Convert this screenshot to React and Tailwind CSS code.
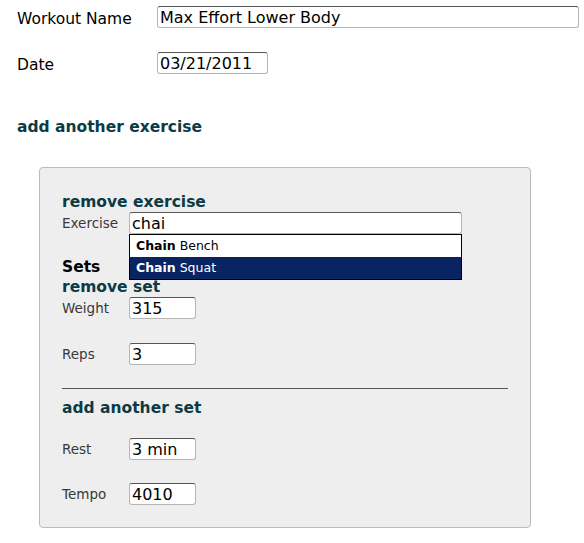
import React from "react";

const font = { fontFamily: '"DejaVu Sans", Verdana, sans-serif' };

function Input({ value, w }) {
  return (
    <input
      readOnly
      value={value}
      className={`${w} h-[22px] bg-white border border-[#b5b5b5] border-t-[#555] rounded-[3px] px-[2px] text-[16px] leading-[20px] text-black outline-none`}
      style={font}
    />
  );
}

function Row({ label, children, className = "" }) {
  return (
    <div className={`flex items-center h-[22px] ${className}`}>
      <div className="w-[67px] text-[13.5px] leading-[22px] text-[#383838]">{label}</div>
      {children}
    </div>
  );
}

export default function App() {
  return (
    <div className="min-h-[543px] bg-white pl-[17px] pt-[6px]" style={font}>
      <div className="flex items-start h-[22px]">
        <div className="w-[140px] text-[15.5px] leading-[22px] text-black mt-[2px]">Workout Name</div>
        <Input value="Max Effort Lower Body" w="w-[422px]" />
      </div>
      <div className="flex items-start h-[22px] mt-[24px]">
        <div className="w-[140px] text-[15.5px] leading-[22px] text-black mt-[2px]">Date</div>
        <Input value="03/21/2011" w="w-[111px]" />
      </div>
      <div className="mt-[43px] h-[20px] leading-[20px] text-[15.5px] font-bold text-[#0b3b44]">
        add another exercise
      </div>
      <div className="mt-[30px] ml-[22px] w-[492px] bg-[#eeeeee] border border-[#bbbbbb] rounded-[4px] pl-[22px] pr-[22px] pt-[25px] pb-[22px]">
        <div className="h-[19px] leading-[19px] text-[15.5px] font-bold text-[#0b3b44]">remove exercise</div>
        <div className="relative">
          <Row label="Exercise">
            <Input value="chai" w="w-[333px]" />
          </Row>
          <div className="absolute left-[67px] top-[22px] w-[333px] bg-white border border-black text-[12.5px] z-10">
            <div className="h-[22px] leading-[22px] pl-[6px] text-black">
              <span className="font-bold">Chain</span> Bench
            </div>
            <div className="h-[22px] leading-[22px] pl-[6px] bg-[#0a2463] text-white">
              <span className="font-bold">Chain</span> Squat
            </div>
          </div>
        </div>
        <div className="mt-[23px] h-[20px] leading-[20px] text-[15.5px] font-bold text-black">Sets</div>
        <div className="h-[20px] leading-[20px] text-[15.5px] font-bold text-[#0b3b44]">remove set</div>
        <Row label="Weight">
          <Input value="315" w="w-[67px]" />
        </Row>
        <Row label="Reps" className="mt-[24px]">
          <Input value="3" w="w-[67px]" />
        </Row>
        <div className="mt-[23px] h-[1px] bg-[#555]" />
        <div className="mt-[9px] h-[20px] leading-[20px] text-[15.5px] font-bold text-[#0b3b44]">add another set</div>
        <Row label="Rest" className="mt-[20px]">
          <Input value="3 min" w="w-[67px]" />
        </Row>
        <Row label="Tempo" className="mt-[23px]">
          <Input value="4010" w="w-[67px]" />
        </Row>
      </div>
    </div>
  );
}
